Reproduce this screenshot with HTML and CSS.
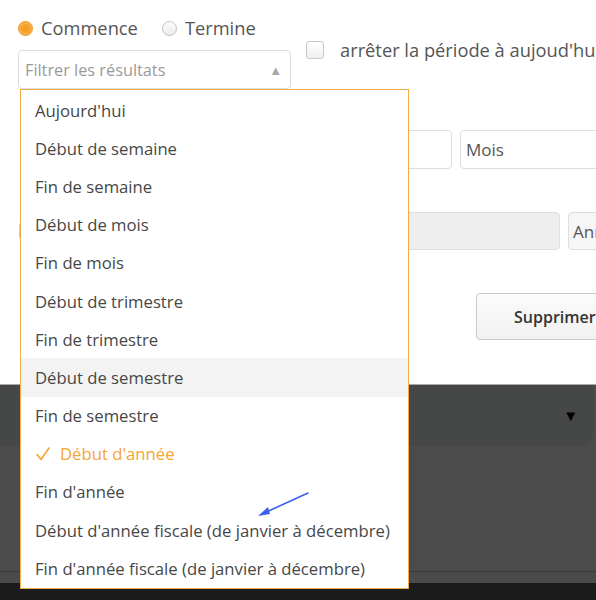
FILE: index.html
```html
<!DOCTYPE html>
<html lang="fr">
<head>
<meta charset="utf-8">
<title>Période</title>
<link rel="stylesheet" href="styles.css">
</head>
<body>
<div class="page">
  <div class="form">
    <div class="radios">
      <label class="radio"><span class="dot on"></span>Commence</label>
      <label class="radio"><span class="dot"></span>Termine</label>
    </div>

    <div class="select-row">
      <div class="select-wrap">
        <div class="select">
          <span class="placeholder">Filtrer les résultats</span>
          <span class="caret">▲</span>
        </div>
        <ul class="menu">
          <li>Aujourd'hui</li>
          <li>Début de semaine</li>
          <li>Fin de semaine</li>
          <li>Début de mois</li>
          <li>Fin de mois</li>
          <li>Début de trimestre</li>
          <li>Fin de trimestre</li>
          <li class="hover">Début de semestre</li>
          <li>Fin de semestre</li>
          <li class="selected"><svg class="tick" width="14" height="14" viewBox="0 0 14 14"><polyline points="1,7.5 5,12.5 13,1" fill="none" stroke="#f5a532" stroke-width="1.6" stroke-linecap="round" stroke-linejoin="round"/></svg>Début d'année</li>
          <li>Fin d'année</li>
          <li>Début d'année fiscale (de janvier à décembre)</li>
          <li>Fin d'année fiscale (de janvier à décembre)</li>
        </ul>
        <svg class="pointer" width="60" height="30" viewBox="0 0 60 30">
          <line x1="55" y1="3" x2="9" y2="24" stroke="#3d5ef0" stroke-width="1.6" stroke-linecap="round"/>
          <polygon points="5,26 15,17 17,24" fill="#3d5ef0"/>
        </svg>
      </div>
      <label class="check"><span class="box"></span>arrêter la période à aujoud'hui</label>
    </div>

    <div class="row row-one">
      <div class="input"></div>
      <div class="input wide">Mois</div>
    </div>

    <div class="row row-two">
      <span class="box small"></span>
      <div class="input disabled"></div>
      <div class="input soft">Année</div>
    </div>

    <div class="row row-btn">
      <button class="btn">Supprimer</button>
    </div>
  </div>

  <div class="panel">
    <div class="panel-head"><span class="down">▼</span></div>
    <div class="panel-body"></div>
    <div class="panel-foot"></div>
  </div>
</div>
</body>
</html>
```

FILE: styles.css
```css
html, body {
  margin: 0;
  padding: 0;
  background: #fff;
  overflow: hidden;
}

body {
  width: 596px;
  height: 600px;
  font-family: "Open Sans", "Noto Sans", sans-serif;
  font-size: 16px;
  color: #4a4a4a;
}

.page {
  width: 596px;
  height: 600px;
  overflow: hidden;
}

.form {
  padding-left: 18px;
}

/* radio buttons */
.radios {
  display: flex;
  gap: 24px;
  padding-top: 18px;
  height: 20px;
  margin-bottom: 12px;
  align-items: center;
}

.radio {
  display: flex;
  align-items: center;
  gap: 8px;
  color: #555;
  font-size: 18.3px;
  line-height: 20px;
}

.dot {
  width: 13px;
  height: 13px;
  border-radius: 50%;
  border: 1px solid #c4c4c4;
  background: linear-gradient(#fdfdfd, #ececec);
  box-sizing: content-box;
}

.dot.on {
  border-color: #f0a030;
  background: #f5a028;
  box-shadow: inset 0 0 0 2px #f7b04a;
}

/* select + checkbox */
.select-row {
  display: flex;
  align-items: flex-start;
  gap: 15px;
}

.select-wrap {
  position: relative;
  width: 273px;
  flex: none;
}

.select {
  height: 39px;
  box-sizing: border-box;
  border: 1px solid #dcdcdc;
  border-radius: 4px;
  display: flex;
  align-items: center;
  justify-content: space-between;
  padding: 0 8px 0 6px;
  color: #9a9a9a;
  font-size: 16.3px;
}

.caret {
  font-size: 13px;
  color: #a8a8a8;
}

.menu {
  position: absolute;
  z-index: 5;
  top: 39px;
  left: 2px;
  width: 389px;
  box-sizing: border-box;
  margin: 0;
  padding: 1px 0;
  list-style: none;
  background: #fff;
  border: 1px solid #f2ad45;
}

.menu li {
  height: 38.2px;
  display: flex;
  align-items: center;
  padding-left: 14px;
  color: #474747;
  font-size: 16.7px;
  white-space: nowrap;
}

.menu li.hover {
  background: #f3f3f3;
}

.menu li.selected {
  color: #f5a532;
}

.tick {
  margin-right: 10px;
  margin-left: 1px;
}

.pointer {
  position: absolute;
  z-index: 6;
  left: 235px;
  top: 440px;
}

.check {
  margin-top: -9px;
  display: flex;
  align-items: center;
  gap: 16px;
  color: #555;
  font-size: 18.3px;
  white-space: nowrap;
  line-height: 18px;
}

.box {
  width: 16px;
  height: 16px;
  border: 1px solid #c8c8c8;
  border-radius: 3px;
  background: linear-gradient(#fff, #f0f0f0);
  flex: none;
}

/* fields behind the menu */
.row {
  display: flex;
  gap: 8px;
  align-items: center;
}

.input {
  height: 39px;
  box-sizing: border-box;
  border: 1px solid #dedede;
  border-radius: 4px;
  display: flex;
  align-items: center;
  padding-left: 5px;
  color: #555;
  font-size: 17px;
  flex: none;
}

.row-one {
  margin-top: 41px;
  padding-left: 282px;
}

.row-one .input {
  width: 152px;
}

.row-one .input.wide {
  width: 170px;
}

.row-two {
  margin-top: 43px;
  padding-left: 1px;
}

.box.small {
  margin-right: 8px;
}

.input.disabled {
  width: 507px;
  height: 38px;
  background: #eeeeee;
}

.input.soft {
  width: 90px;
  height: 38px;
  background: #f6f6f6;
  padding-left: 4px;
}

.row-btn {
  margin-top: 43px;
  padding-left: 458px;
}

.btn {
  width: 140px;
  height: 47px;
  border: 1px solid #c9c9c9;
  border-radius: 4px;
  background: linear-gradient(#fbfbfb, #f1f1f1);
  font-family: "Open Sans", "Noto Sans", sans-serif;
  font-size: 16px;
  font-weight: 600;
  color: #333;
  text-align: left;
  padding-left: 37px;
  flex: none;
}

/* dark lower panel */
.panel {
  margin-top: 44px;
  border-top: 1px solid #a9a9a9;
  background: #4b4b4b;
  height: 216px;
  display: flex;
  flex-direction: column;
}

.panel-head {
  height: 61px;
  background: #464747;
  margin-right: 2px;
  border-radius: 0 0 16px 0;
  display: flex;
  align-items: center;
  justify-content: flex-end;
  padding-right: 16px;
}

.down {
  color: #000;
  font-size: 15px;
  margin-top: -1px;
}

.panel-body {
  flex: 1;
  border-bottom: 1px solid #3a3a3a;
  margin-bottom: 11px;
}

.panel-foot {
  height: 18px;
  background: #1b1b1b;
}
```
